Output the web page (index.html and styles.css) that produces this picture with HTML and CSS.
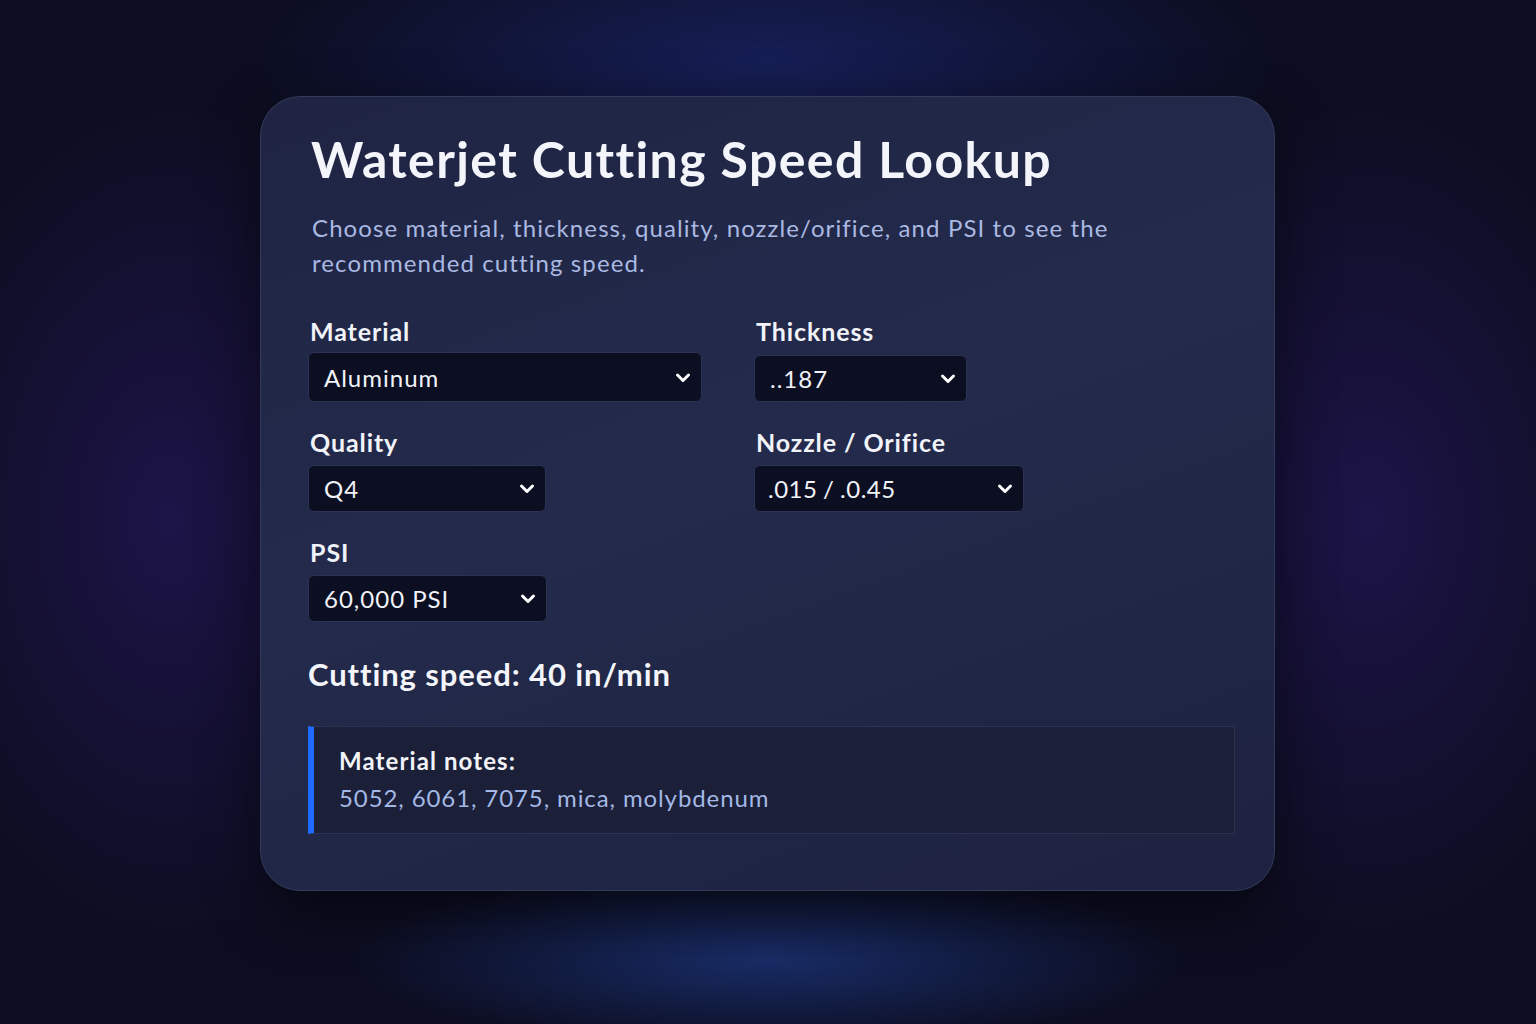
FILE: index.html
```html
<!DOCTYPE html>
<html lang="en">
<head>
<meta charset="utf-8">
<title>Waterjet Cutting Speed Lookup</title>
<link rel="stylesheet" href="styles.css">
</head>
<body>
<div class="page">
  <main class="card">
    <h1 class="title">Waterjet Cutting Speed Lookup</h1>
    <p class="subtitle">Choose material, thickness, quality, nozzle/orifice, and PSI to see the recommended cutting speed.</p>

    <div class="fields">
      <div class="field">
        <div class="label">Material</div>
        <div class="select select-material"><span>Aluminum</span><svg class="chev" viewBox="0 0 16 11"><path d="M2.5 3 L8 8.5 L13.5 3"/></svg></div>
      </div>
      <div class="field">
        <div class="label">Thickness</div>
        <div class="select select-thickness"><span>..187</span><svg class="chev" viewBox="0 0 16 11"><path d="M2.5 3 L8 8.5 L13.5 3"/></svg></div>
      </div>
      <div class="field">
        <div class="label">Quality</div>
        <div class="select select-quality"><span>Q4</span><svg class="chev" viewBox="0 0 16 11"><path d="M2.5 3 L8 8.5 L13.5 3"/></svg></div>
      </div>
      <div class="field">
        <div class="label">Nozzle / Orifice</div>
        <div class="select select-nozzle"><span>.015 / .0.45</span><svg class="chev" viewBox="0 0 16 11"><path d="M2.5 3 L8 8.5 L13.5 3"/></svg></div>
      </div>
      <div class="field">
        <div class="label">PSI</div>
        <div class="select select-psi"><span>60,000 PSI</span><svg class="chev" viewBox="0 0 16 11"><path d="M2.5 3 L8 8.5 L13.5 3"/></svg></div>
      </div>
    </div>

    <div class="result">Cutting speed: 40 in/min</div>

    <div class="notes">
      <div class="notes-title">Material notes:</div>
      <div class="notes-text">5052, 6061, 7075, mica, molybdenum</div>
    </div>
  </main>
</div>
</body>
</html>
```

FILE: styles.css
```css
* { box-sizing: border-box; }
html, body { margin: 0; padding: 0; }
body {
  width: 1536px;
  height: 1024px;
  overflow: hidden;
  font-family: "Lato", "Noto Sans", sans-serif;
  color: #f1f3f9;
  background:
    radial-gradient(ellipse 420px 90px at 768px 960px, rgba(35, 70, 160, 0.55), rgba(35, 70, 160, 0) 100%),
    radial-gradient(ellipse 520px 160px at 768px 60px, rgba(30, 45, 130, 0.55), rgba(30, 45, 130, 0) 100%),
    radial-gradient(ellipse 280px 440px at 170px 520px, rgba(50, 28, 120, 0.45), rgba(50, 28, 120, 0) 100%),
    radial-gradient(ellipse 280px 440px at 1370px 520px, rgba(50, 28, 120, 0.45), rgba(50, 28, 120, 0) 100%),
    #0c0d20;
}
.page {
  padding: 96px 0 0 260px;
}
.card {
  width: 1015px;
  height: 795px;
  border: 1px solid #343a5a;
  border-radius: 40px;
  background: linear-gradient(160deg, #1f2443 0%, #232a4b 45%, #1d2240 100%);
  box-shadow: 0 20px 60px rgba(0, 0, 0, 0.45);
  padding: 30px 39px 0 47px;
}
.title {
  margin: 0 0 0 3px;
  font-size: 50px;
  line-height: 64px;
  font-weight: 700;
  color: #f4f5fa;
  letter-spacing: 1.4px;
}
.subtitle {
  margin: 19px 0 0 4px;
  width: 860px;
  font-size: 24px;
  line-height: 35px;
  color: #aab9e2;
  letter-spacing: 1.1px;
}
.fields {
  margin-top: 36px;
  display: grid;
  grid-template-columns: 446px auto;
  row-gap: 25px;
  align-items: start;
}
.field {
  display: flex;
  flex-direction: column;
  align-items: flex-start;
}
.label {
  margin-left: 2px;
  font-size: 25px;
  line-height: 30px;
  font-weight: 700;
  color: #f1f3f9;
  margin-bottom: 6px;
  letter-spacing: 0.9px;
}
.select {
  display: flex;
  align-items: center;
  justify-content: space-between;
  height: 47px;
  padding: 0 10px 0 15px;
  background: #0c0f22;
  border: 1px solid #2b3252;
  border-radius: 6px;
  font-size: 24px;
  color: #f1f3f9;
  letter-spacing: 1px;
}
.chev {
  width: 16px;
  height: 11px;
  fill: none;
  stroke: #ffffff;
  stroke-width: 3;
  stroke-linecap: round;
  stroke-linejoin: round;
}
.select-material { width: 394px; height: 50px; }
.select-thickness { width: 213px; margin-top: 3px; }
.select-quality { width: 238px; margin-top: 2px; }
.select-nozzle { width: 270px; margin-top: 2px; padding-left: 13px; letter-spacing: 0.5px; word-spacing: -1px; }
.select-psi { width: 239px; margin-top: 2px; }

.result {
  margin-top: 33px;
  font-size: 31px;
  line-height: 38px;
  font-weight: 700;
  color: #f4f5fa;
  letter-spacing: 0.9px;
}
.notes {
  margin-top: 33px;
  width: 927px;
  height: 108px;
  border: 1px solid #2c3352;
  border-left: 6px solid #1f6bff;
  background: #1b1f37;
  padding: 18px 0 0 25px;
}
.notes-title {
  font-size: 24px;
  line-height: 32px;
  font-weight: 700;
  color: #f1f3f9;
  letter-spacing: 1.1px;
}
.notes-text {
  margin-top: 5px;
  font-size: 24px;
  line-height: 32px;
  color: #a3b8e6;
  letter-spacing: 0.9px;
}
```
